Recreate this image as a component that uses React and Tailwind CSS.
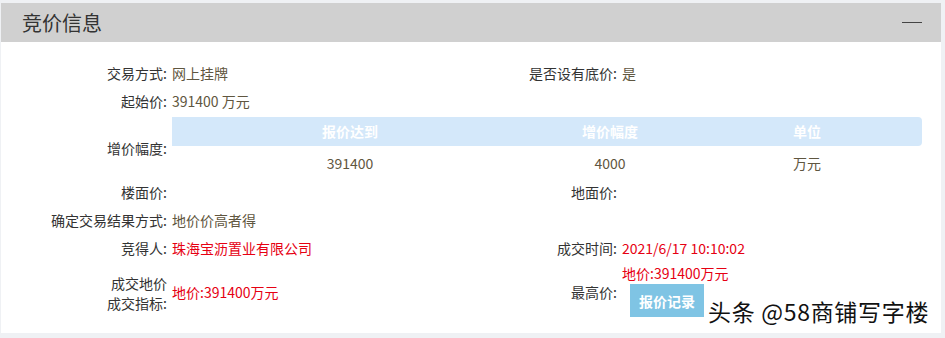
const font = { fontFamily: '"Microsoft YaHei", "Noto Sans CJK SC", "Noto Sans", sans-serif' };

function Label({ children }) {
  return <div className="text-right pr-[5px] text-[#333]">{children}</div>;
}

function Value({ children, red }) {
  return <div className={red ? "text-[#e60012]" : "text-[#5f5640]"}>{children}</div>;
}

export default function App() {
  return (
    <div style={font} className="w-[945px] h-[338px] bg-[#eff1f4] pt-[3px] pl-px pr-[4px] overflow-hidden">
      <div className="relative bg-white h-[330px]">
        {/* Header */}
        <div className="h-[39px] bg-[#d0d0d0] flex items-center justify-between pl-[21px] pr-[19px]">
          <span className="text-[20px] text-[#333] leading-none">竞价信息</span>
          <span className="block w-[20px] h-[1.5px] bg-[#444]" />
        </div>

        {/* Body */}
        <div className="grid grid-cols-[171px_298px_152px_1fr] pr-[19px] pt-[17px] text-[14px] leading-[28px]">
          <Label>交易方式:</Label>
          <Value>网上挂牌</Value>
          <Label>是否设有底价:</Label>
          <Value>是</Value>

          <Label>起始价:</Label>
          <Value>391400 万元</Value>
          <div />
          <div />

          <div className="flex items-center justify-end pr-[5px] h-[63px] pt-[2px] text-[#333]">增价幅度:</div>
          <div className="col-span-3 pt-[2px]">
            <div className="grid grid-cols-[356px_164px_1fr] text-center">
              <div className="bg-[#d4e8fa] h-[29px] leading-[29px] text-white font-bold">报价达到</div>
              <div className="bg-[#d4e8fa] h-[29px] leading-[29px] text-white font-bold">增价幅度</div>
              <div className="bg-[#d4e8fa] h-[29px] leading-[29px] text-white font-bold rounded-r-sm">单位</div>
              <div className="h-[30px] leading-[34px] text-[#5f5640]">391400</div>
              <div className="h-[30px] leading-[34px] text-[#5f5640]">4000</div>
              <div className="h-[30px] leading-[34px] text-[#5f5640]">万元</div>
            </div>
          </div>

          <Label>楼面价:</Label>
          <Value />
          <Label>地面价:</Label>
          <Value />

          <Label>确定交易结果方式:</Label>
          <Value>地价价高者得</Value>
          <div />
          <div />

          <Label>竞得人:</Label>
          <Value red>珠海宝沥置业有限公司</Value>
          <Label>成交时间:</Label>
          <Value red>2021/6/17 10:10:02</Value>

          <div className="flex flex-col justify-center items-end gap-[6px] pr-[5px] text-[#333] leading-none h-[60px] pt-[1px]">
            <span>成交地价</span>
            <span>成交指标:</span>
          </div>
          <div className="flex items-center h-[60px] text-[#e60012]">地价:391400万元</div>
          <div className="flex items-center justify-end pr-[5px] h-[60px] text-[#333]">最高价:</div>
          <div className="h-[60px] pt-[1px]">
            <div className="text-[#e60012] leading-[20px]">地价:391400万元</div>
            <div className="ml-[8px] mt-[1px] w-[74px] h-[33px] bg-[#7fc4e4] text-white font-bold flex items-center justify-center text-[14px]">
              报价记录
            </div>
          </div>
        </div>

        {/* Watermark */}
        <div
          className="absolute left-[707px] top-[297px] text-[23px] leading-none text-[#111] tracking-[0.7px] whitespace-nowrap"
          style={{ textShadow: "0 0 2px #fff, 0 0 2px #fff, 1px 1px 1px #fff" }}
        >
          头条 @58商铺写字楼
        </div>
      </div>
    </div>
  );
}
